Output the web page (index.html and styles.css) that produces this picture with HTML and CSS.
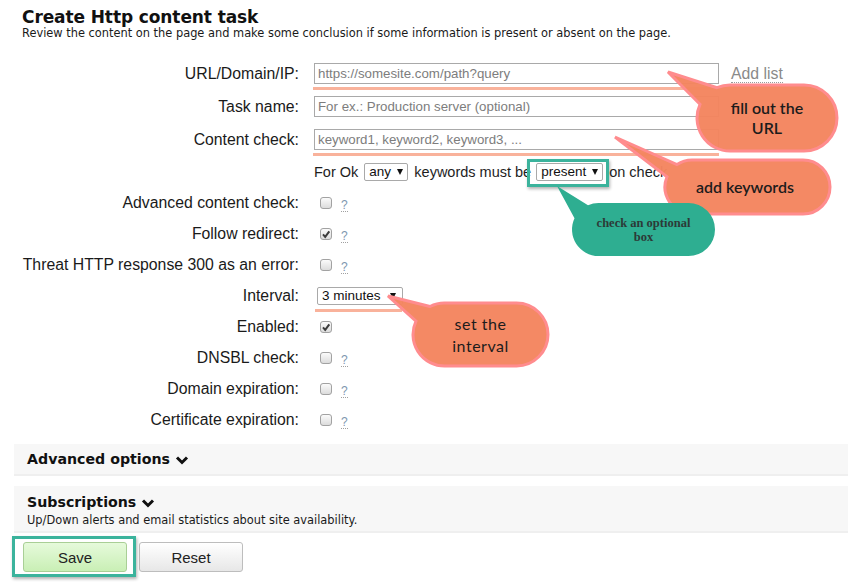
FILE: index.html
```html
<!DOCTYPE html>
<html>
<head>
<meta charset="utf-8">
<title>Create Http content task</title>
<link rel="stylesheet" href="styles.css">
</head>
<body>
<div class="page">
  <header class="head">
    <h1 class="title">Create Http content task</h1>
    <p class="sub">Review the content on the page and make some conclusion if some information is present or absent on the page.</p>
  </header>

  <form class="form">
    <div class="row tall">
      <label class="lbl">URL/Domain/IP:</label>
      <div class="ctl"><span class="mark"><input class="txt" type="text" placeholder="https://somesite.com/path?query"></span><a class="addlist">Add list</a></div>
    </div>
    <div class="row tall">
      <label class="lbl">Task name:</label>
      <div class="ctl"><input class="txt" type="text" placeholder="For ex.: Production server (optional)"></div>
    </div>
    <div class="row tall">
      <label class="lbl">Content check:</label>
      <div class="ctl"><span class="mark"><input class="txt" type="text" placeholder="keyword1, keyword2, keyword3, ..."></span></div>
    </div>
    <div class="row">
      <span class="lbl"></span>
      <div class="ctl okline">For Ok <span class="sel sel-any">any <span class="arr"></span></span> keywords must be <span class="hl-present"><span class="sel sel-present">present <span class="arr"></span></span></span> on check</div>
    </div>
    <div class="row">
      <label class="lbl">Advanced content check:</label>
      <div class="ctl"><span class="cb"></span><span class="help">?</span></div>
    </div>
    <div class="row">
      <label class="lbl">Follow redirect:</label>
      <div class="ctl"><span class="cb on"><svg viewBox="0 0 10 10" width="10" height="10"><path d="M2 5.3 L4.2 7.8 L8.3 2.3" fill="none" stroke="#3c3c3c" stroke-width="2"/></svg></span><span class="help">?</span></div>
    </div>
    <div class="row">
      <label class="lbl">Threat HTTP response 300 as an error:</label>
      <div class="ctl"><span class="cb"></span><span class="help">?</span></div>
    </div>
    <div class="row">
      <label class="lbl">Interval:</label>
      <div class="ctl"><span class="mark mark-int"><span class="sel sel-int">3 minutes <span class="arr"></span></span></span></div>
    </div>
    <div class="row">
      <label class="lbl">Enabled:</label>
      <div class="ctl"><span class="cb on"><svg viewBox="0 0 10 10" width="10" height="10"><path d="M2 5.3 L4.2 7.8 L8.3 2.3" fill="none" stroke="#3c3c3c" stroke-width="2"/></svg></span></div>
    </div>
    <div class="row">
      <label class="lbl">DNSBL check:</label>
      <div class="ctl"><span class="cb"></span><span class="help">?</span></div>
    </div>
    <div class="row">
      <label class="lbl">Domain expiration:</label>
      <div class="ctl"><span class="cb"></span><span class="help">?</span></div>
    </div>
    <div class="row">
      <label class="lbl">Certificate expiration:</label>
      <div class="ctl"><span class="cb"></span><span class="help">?</span></div>
    </div>
  </form>

  <section class="sect adv">
    <h2 class="sect-title">Advanced options <svg class="chev" viewBox="0 0 14 10" width="14" height="10"><path d="M2 2.5 L7 7.5 L12 2.5" fill="none" stroke="#111" stroke-width="3"/></svg></h2>
  </section>

  <section class="sect subs">
    <h2 class="sect-title">Subscriptions <svg class="chev" viewBox="0 0 14 10" width="14" height="10"><path d="M2 2.5 L7 7.5 L12 2.5" fill="none" stroke="#111" stroke-width="3"/></svg></h2>
    <p class="sect-sub">Up/Down alerts and email statistics about site availability.</p>
  </section>

  <div class="btns">
    <span class="hl-save"><button class="btn save" type="button">Save</button></span>
    <button class="btn reset" type="button">Reset</button>
  </div>
</div>

<svg class="overlay" width="848" height="582" viewBox="0 0 848 582">
  <g class="bubble">
    <path d="M717 87.7 L668 72 L700 104.3 A33 33 0 0 0 730 151 L804 151 A33 33 0 0 0 804 85 L730 85 A33 33 0 0 0 717 87.7 Z"/>
    <path d="M677 164.6 L615 137 L667 176.8 A27 27 0 0 0 692 214 L803 214 A27 27 0 0 0 803 160 L692 160 A27 27 0 0 0 677 164.6 Z"/>
    <path d="M430 306.5 L388 296 L416 321.1 A31.5 31.5 0 0 0 444.5 366 L516.5 366 A31.5 31.5 0 0 0 516.5 303 L444.5 303 A31.5 31.5 0 0 0 430 306.5 Z"/>
  </g>
  <path class="bubble-teal" d="M588 205.2 L557 186 L574.5 218.3 A26.5 26.5 0 0 0 598.5 256 L688.5 256 A26.5 26.5 0 0 0 688.5 203 L598.5 203 A26.5 26.5 0 0 0 588 205.2 Z"/>
</svg>

<div class="callout c-url">fill out the<br>URL</div>
<div class="callout c-kw">add keywords</div>
<div class="callout c-int">set the<br>interval</div>
<div class="callout teal c-opt">check an optional<br>box</div>
</body>
</html>
```

FILE: styles.css
```css
html, body {
  margin: 0;
  padding: 0;
  background: #fff;
}
body {
  position: relative;
  width: 848px;
  height: 582px;
  overflow: hidden;
  font-family: "Liberation Sans", Arial, sans-serif;
  color: #1e1e1e;
}
.page {
  padding: 7px 0 0 14px;
}
.head {
  padding-left: 8px;
}
.title {
  margin: 0;
  font-family: "DejaVu Sans", Verdana, sans-serif;
  font-weight: bold;
  font-size: 17px;
  line-height: 20px;
  color: #111;
  letter-spacing: -0.1px;
}
.sub {
  margin: 0;
  font-family: "DejaVu Sans", Verdana, sans-serif;
  font-size: 11.4px;
  line-height: 13px;
  color: #1a1a1a;
}
.form {
  margin-top: 17px;
}
.row {
  display: grid;
  grid-template-columns: 285px 1fr;
  column-gap: 15px;
  align-items: center;
  height: 31px;
}
.row.tall {
  height: 33px;
}
.lbl {
  text-align: right;
  font-size: 15.8px;
  color: #1a1a1a;
  white-space: nowrap;
}
.ctl {
  display: flex;
  align-items: center;
}
.mark {
  position: relative;
  display: flex;
}
.mark::after {
  content: "";
  position: absolute;
  left: -1px;
  right: 0;
  bottom: -6px;
  height: 3px;
  background: #f9b29b;
}
.mark-int::after {
  left: 1px;
  right: 1px;
  bottom: -7px;
}
.txt {
  display: block;
  width: 405px;
  height: 21px;
  box-sizing: border-box;
  margin: 0;
  border: 1px solid #a9a9a9;
  padding: 0 3px;
  font-family: "Liberation Sans", Arial, sans-serif;
  font-size: 13.3px;
  color: #222;
  outline: none;
}
.txt::placeholder {
  color: #7d7d7d;
}
.addlist {
  margin-left: 12px;
  font-size: 15.8px;
  color: #8a8a8a;
  border-bottom: 1px dotted #9a9a9a;
  line-height: 17px;
}
.okline {
  font-size: 14.5px;
  white-space: nowrap;
}
.sel {
  display: inline-flex;
  align-items: center;
  justify-content: space-between;
  box-sizing: border-box;
  height: 18px;
  border: 1px solid #a9a9a9;
  border-radius: 2px;
  background: #fff;
  padding: 0 4px 0 4px;
  font-size: 13.5px;
  color: #111;
}
.arr {
  width: 0;
  height: 0;
  margin-left: 6px;
  border-left: 3.5px solid transparent;
  border-right: 3.5px solid transparent;
  border-top: 6px solid #111;
}
.sel-any {
  width: 44px;
  margin: 0 6px 0 6px;
}
.hl-present {
  position: relative;
  display: inline-flex;
  margin: 0 6px 0 5px;
}
.hl-present::after {
  content: "";
  position: absolute;
  left: -9px;
  top: -4px;
  right: -6px;
  bottom: -6px;
  border: 3px solid #3bb39c;
  box-shadow: 1px 2px 3px rgba(0, 0, 0, 0.3);
}
.sel-present {
  width: 67px;
}
.sel-int {
  width: 86px;
  margin-left: 3px;
  padding-left: 4px;
  padding-right: 6px;
}
.cb {
  display: inline-flex;
  align-items: center;
  justify-content: center;
  width: 12px;
  height: 12px;
  box-sizing: border-box;
  margin-left: 6px;
  border: 1px solid #a2a2a2;
  border-radius: 3px;
  background: linear-gradient(#fbfbfb, #dcdcdc);
}
.help {
  margin-left: 9px;
  margin-top: 5px;
  font-size: 12px;
  line-height: 12px;
  color: #8097b0;
  border-bottom: 1px dotted #a0a0a0;
}
.sect {
  background: #f7f7f7;
  border-bottom: 2px solid #efefef;
  padding: 0 13px;
}
.sect-title {
  margin: 0;
  display: flex;
  align-items: center;
  font-family: "DejaVu Sans", Verdana, sans-serif;
  font-weight: bold;
  font-size: 14.2px;
  color: #111;
}
.chev {
  margin-left: 5px;
  margin-top: 2px;
}
.adv {
  margin-top: 9px;
}
.adv .sect-title {
  height: 30px;
}
.subs {
  margin-top: 10px;
  padding-top: 6px;
  padding-bottom: 4px;
}
.subs .sect-title {
  height: 19px;
}
.sect-sub {
  margin: 2px 0 0;
  font-family: "DejaVu Sans", Verdana, sans-serif;
  font-size: 11.4px;
  line-height: 14px;
  color: #1a1a1a;
}
.btns {
  display: flex;
  gap: 12px;
  margin-top: 9px;
  padding-left: 9px;
}
.btn {
  width: 104px;
  height: 30px;
  box-sizing: border-box;
  border-radius: 3px;
  font-family: "Liberation Sans", Arial, sans-serif;
  font-size: 15px;
  color: #222;
  padding: 0;
}
.save {
  border: 1px solid #a9cf96;
  background: linear-gradient(#e6fadb, #c9efb5);
}
.reset {
  border: 1px solid #bdbdbd;
  background: linear-gradient(#ffffff, #e7e7e7);
}
.hl-save {
  position: relative;
  display: inline-flex;
}
.hl-save::after {
  content: "";
  position: absolute;
  left: -11px;
  top: -6px;
  right: -9px;
  bottom: -5px;
  border: 3px solid #3bb39c;
  box-shadow: 1px 2px 3px rgba(0, 0, 0, 0.3);
}
.overlay {
  position: absolute;
  left: 0;
  top: 0;
  pointer-events: none;
}
.bubble path {
  fill: #f4855f;
  fill-opacity: 0.97;
  stroke: #ff8c8e;
  stroke-width: 3;
}
.bubble-teal {
  fill: #2eae91;
}
.callout {
  position: absolute;
  display: flex;
  align-items: center;
  justify-content: center;
  text-align: center;
  font-family: Lato, "Open Sans", sans-serif;
  font-weight: 600;
  font-size: 16px;
  line-height: 20px;
  color: #1c1c1c;
}
.c-url {
  left: 697px;
  top: 85px;
  width: 140px;
  height: 66px;
}
.c-kw {
  left: 665px;
  top: 160px;
  width: 160px;
  height: 54px;
}
.c-int {
  left: 413px;
  top: 303px;
  width: 135px;
  height: 63px;
  font-weight: 400;
  line-height: 22px;
  letter-spacing: 0.5px;
}
.c-opt {
  left: 572px;
  top: 203px;
  width: 143px;
  height: 53px;
  font-family: "Liberation Serif", "Times New Roman", serif;
  font-weight: bold;
  font-size: 12.5px;
  line-height: 14px;
  color: #2c3a37;
}
```
